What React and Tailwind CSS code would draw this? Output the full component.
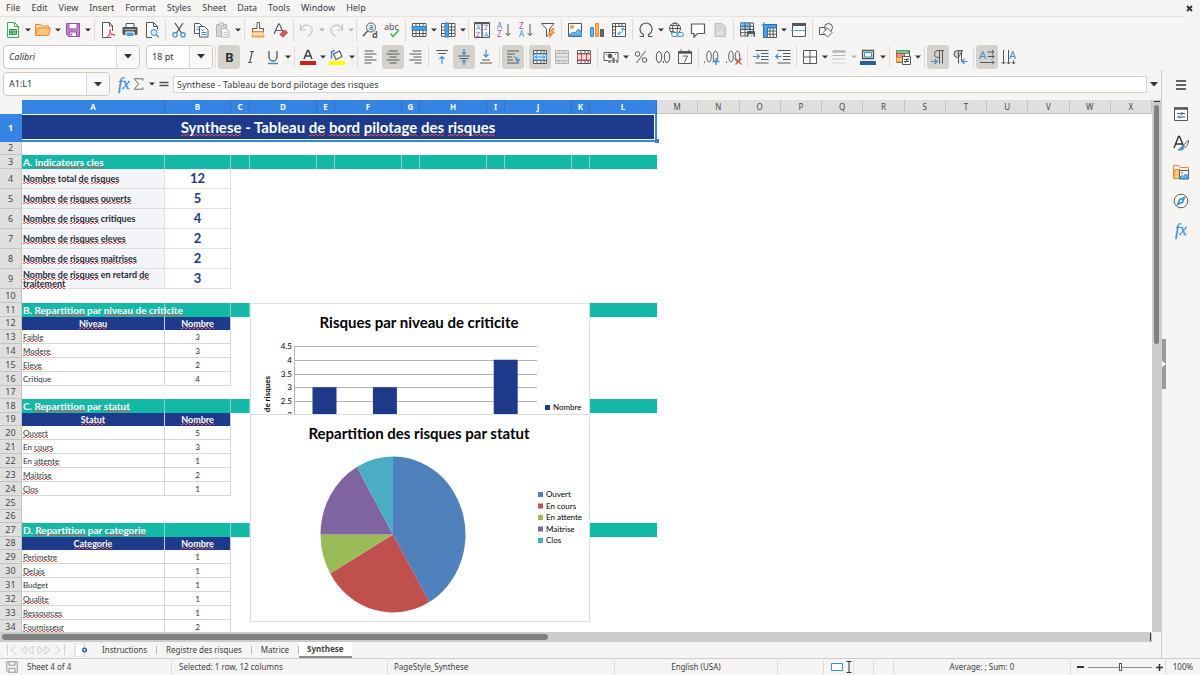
const BLUE = "#3a8fd6"
const GRAY = "#55585a"

const ORANGE = "#ed8733"

function Svg({ children, size = 16, label }) {
  return (
    <svg
      width={size}
      height={size}
      viewBox="0 0 16 16"
      fill="none"
      stroke={GRAY}
      strokeWidth="1"
      aria-label={label}
      className="shrink-0 overflow-visible"
    >
      {children}
    </svg>
  )
}

// Small text drawn inside an icon
function T({ x, y, s = 8, c = GRAY, b, children }) {
  return (
    <text x={x} y={y} fontSize={s} fill={c} stroke="none" fontWeight={b ? 700 : 400} fontFamily="Noto Sans, sans-serif">
      {children}
    </text>
  )
}

const icons = {
  new: (
    <>
      <path d="M2.500 .5h7l4 4v11h-11z" fill="#fff" stroke="#3fae5c" />
      <path d="M9.500 .5v4h4" stroke="#3fae5c" />
      <path d="M4.500 7.500h7v5h-7zM4.500 10h7M7 7.500v5" fill="#8fd6a0" stroke="#2f9b4c" />
    </>
  ),
  open: (
    <>
      <path d="M.5 13.500v-11h5l1.500 1.500h6.500v3" fill="#fcd9a0" stroke={ORANGE} />
      <path d="M.5 13.500l2-7.500h13l-2 7.500z" fill="#fbc878" stroke={ORANGE} />
    </>
  ),
  save: (
    <>
      <path d="M1.500 1.500h13v13h-11l-2-2z" fill="#c77fd0" stroke="#9b4fa8" />
      <path d="M4 1.500h8v5.500h-8z" fill="#fff" stroke="#9b4fa8" />
      <path d="M4.500 10h7v4.500h-7z" fill="#fff" stroke="#9b4fa8" />
      <path d="M6.500 11.500v2" stroke="#9b4fa8" strokeWidth="1.500" />
    </>
  ),
  pdf: (
    <>
      <path d="M11 15.500h-8.500v-15h7l3 3.500v5" fill="#fff" />
      <path d="M9.500 .5v3.500h3" />
      <path d="M7.500 14.500c2-2 3-5 2.500-7 -1 2 2.500 6 5 5.500 -2-1.500-5.500 0-7.500 1.500z" stroke="#d8464d" />
    </>
  ),
  print: (
    <>
      <path d="M4 5v-3.500h8v3.500" fill="#fff" />
      <path d="M1 5.500h14v7h-14z" fill={GRAY} />
      <path d="M2.500 7.500h11" stroke="#8cc4ee" />
      <path d="M4 10h8v4.500h-8z" fill="#4aa0e6" stroke="#fff" />
    </>
  ),
  preview: (
    <>
      <path d="M8 15.500h-5.500v-15h7l4 4v3" fill="#fff" />
      <path d="M9.500 .5v4h4" />
      <circle cx="10" cy="10.500" r="3" fill="#d5eaf9" stroke={BLUE} />
      <path d="M12.300 12.800l2.500 2.500" stroke={BLUE} strokeWidth="1.300" />
    </>
  ),
  cut: (
    <>
      <path d="M4 1l6.500 10M12 1l-6.500 10" strokeWidth="1.300" />
      <circle cx="4" cy="12.800" r="2.200" stroke={BLUE} strokeWidth="1.200" />
      <circle cx="12" cy="12.800" r="2.200" stroke={BLUE} strokeWidth="1.200" />
    </>
  ),
  copy: (
    <>
      <path d="M1.500 1.500h5l3 3v7h-8z" fill="#fff" />
      <path d="M3.500 5h3M3.500 7.500h3" stroke={BLUE} />
      <path d="M6.500 4.500h5l3.500 3.500v7h-8.500z" fill="#fff" />
      <path d="M8.500 8h3M8.500 10.500h5M8.500 12.500h5" stroke={BLUE} />
    </>
  ),
  paste: (
    <>
      <path d="M1.500 2.500h10v12h-10z" fill="#d4d4d2" stroke="#b5b5b3" />
      <path d="M4.500 1h4v2.500h-4z" fill="#efefed" stroke="#b5b5b3" />
      <path d="M6.500 6.500h5l2.500 2.500v6h-7.500z" fill="#f4f4f2" stroke="#b5b5b3" />
      <path d="M8.500 10.500h4M8.500 12.500h4" stroke="#c8c8c6" />
    </>
  ),
  clone: (
    <>
      <path d="M7 .5h2.500v6h4v3h-11v-3h4.500z" fill="#fff" />
      <path d="M3 9.500h10l1 5.500h-12z" fill="#fbc878" stroke={ORANGE} />
      <path d="M2 12h12" stroke="#fff" />
    </>
  ),
  clear: (
    <>
      <path d="M2 12l4.500-10h1l3.500 8M3.500 8.500h6" strokeWidth="1.200" />
      <path d="M8 12.500l4.500-4.500 3 2.500-4.500 4.500z" fill="#e8545c" stroke="#cf3b44" />
    </>
  ),
  undo: <path d="M1.500 2.500v5.500h5.500M1.500 8c2-4 5-5.500 8-4.500 3.500 1.200 5 4.500 2.500 8l-3.500 3" stroke="#c3c3c1" strokeWidth="1.200" />,
  redo: <path d="M14.500 2.500v5.500h-5.500M14.500 8c-2-4-5-5.500-8-4.500 -3.500 1.200-5 4.500-2.500 8l3.500 3" stroke="#c3c3c1" strokeWidth="1.200" />,
  find: (
    <>
      <circle cx="9" cy="5.500" r="4.500" fill="#fff" />
      <path d="M5.800 8.800l-4.800 5.500" strokeWidth="1.500" />
      <T x={6.500} y={8} s={8} c={BLUE} b>a</T>
      <T x={10} y={15.500} s={9} b>d</T>
    </>
  ),
  spell: (
    <>
      <T x={0} y={7.500} s={9}>abc</T>
      <path d="M6.500 11.500l2.500 3 6-6.500" stroke="#3fb65e" strokeWidth="1.500" />
    </>
  ),
  row: (
    <>
      <path d="M1.500 1.500h13.500v13h-13.500z" fill="#fff" />
      <path d="M1.500 8h13.500M1.500 11.500h13.500M5 1.500v13M8.500 1.500v13M12 1.500v13" />
      <path d="M1 4.500h14.500v3.500h-14.500z" fill="#4aa0e6" stroke="#2b7fc4" />
    </>
  ),
  col: (
    <>
      <path d="M1.500 1.500h13.500v13h-13.500z" fill="#fff" />
      <path d="M1.500 5h13.500M1.500 8h13.500M1.500 11.500h13.500M11.500 1.500v13" />
      <path d="M5 1h3.500v14h-3.500z" fill="#4aa0e6" stroke="#2b7fc4" />
    </>
  ),
  sort: (
    <>
      <path d="M.5 .5h15v15h-15z" fill="#fff" />
      <path d="M.5 1.500h15M8 2v13.500" strokeWidth="1.500" />
      <T x={2} y={8} s={7} c={BLUE}>A</T>
      <T x={2} y={14.500} s={7} c="#a452b4">Z</T>
      <T x={10} y={8} s={7} c="#a452b4">Z</T>
      <T x={10} y={14.500} s={7} c={BLUE}>A</T>
    </>
  ),
  sortAsc: (
    <>
      <T x={1} y={7} s={8} c={BLUE}>A</T>
      <T x={1} y={15} s={8} c="#a452b4">Z</T>
      <path d="M12 2v11.500M9.500 11l2.500 2.500 2.500-2.500" />
    </>
  ),
  sortDesc: (
    <>
      <T x={1} y={7} s={8} c="#a452b4">Z</T>
      <T x={1} y={15} s={8} c={BLUE}>A</T>
      <path d="M12 2v11.500M9.500 11l2.500 2.500 2.500-2.500" />
    </>
  ),
  filter: (
    <>
      <path d="M1.500 1.500h12.500l-4.500 5.500v5.500l-3 2v-7.500z" fill="#fff" />
      <path d="M12 6.500l-3.500 5h2.500l-1.500 4 5-5.500h-2.500l2-3.500z" fill="#fbb45c" stroke={ORANGE} />
    </>
  ),
  image: (
    <>
      <path d="M1.500 1.500h13v13h-13z" fill="#fff" />
      <circle cx="5" cy="5" r="1.500" fill="#fbb45c" stroke={ORANGE} />
      <path d="M2 13l4-3 2 1 3.500-4 3 3v4h-12.500z" fill="#6ab4ea" stroke={BLUE} />
    </>
  ),
  chart: (
    <>
      <path d="M1.500 5.500h3v9h-3z" fill="#6ab4ea" stroke={BLUE} />
      <path d="M6.500 1.500h3v13h-3z" fill="#fbb45c" stroke={ORANGE} />
      <path d="M11.500 7.500h3v7h-3z" fill="#6a6d6f" />
    </>
  ),
  pivot: (
    <>
      <path d="M1.500 1.500h13v13h-13zM1.500 4.500h13M4.500 1.500v13" fill="#fff" />
      <path d="M7 11.500c4 0 5-1.500 5-5M10 8l2-2 2 2M9 9.500l-2 2 2 2" stroke={BLUE} />
      <path d="M2 8h2M2 11h2M8 2v2M11 2v2" />
    </>
  ),
  omega: (
    <path
      d="M1.500 14.500h4v-2c-2-1-3.500-3-3.500-5.500a6 6 0 0 1 12 0c0 2.500-1.500 4.500-3.500 5.500v2h4"
      strokeWidth="1.200"
    />
  ),
  link: (
    <>
      <circle cx="7" cy="6.500" r="5.500" fill="#fff" />
      <ellipse cx="7" cy="6.500" rx="2.500" ry="5.500" />
      <path d="M1.500 6.500h11M2.500 3.500h9M2.500 9.500h4" />
      <rect x="3.500" y="10.500" width="6.500" height="4" rx="2" fill="#f6f5f4" stroke={BLUE} />
      <rect x="9" y="10.500" width="6.500" height="4" rx="2" stroke={BLUE} />
    </>
  ),
  comment: <path d="M1.500 2h13v9.500h-7l-3.500 3.500v-3.500h-2.500z" fill="#fff" strokeWidth="1.200" />,
  doc: (
    <>
      <path d="M3 1.500h7l3.500 3.500v9.500h-10.500z" fill="#d6d6d4" stroke="#c0c0be" />
      <path d="M5 10h6M5 12h6" stroke="#efefed" />
    </>
  ),
  printRange: (
    <>
      <path d="M1.500 1h13v13h-13z" fill="#fff" />
      <path d="M1.500 1h9.500v6.500h-9.500z" fill="#8cc4ee" stroke={BLUE} />
      <path d="M1.500 4.200h13M1.500 7.500h13M1.500 10.700h8M6 1v13M11 1v8" />
      <path d="M8.500 9.500h7v5h-7z" fill={GRAY} />
      <path d="M10 12.500h4v2.500h-4z" fill="#8cc4ee" stroke="#fff" />
    </>
  ),
  freeze: (
    <>
      <path d="M2.500 2.500h13v13h-13zM2.500 9h13M2.500 12.200h13M9 5v10.500M12.200 5v10.500" fill="#fff" />
      <path d="M2.500 2.500h13v3.500h-9v9.500h-4z" fill="#4aa0e6" stroke="#2b6fae" />
      <path d="M3 0v6M0 3h6" stroke={BLUE} />
    </>
  ),
  split: (
    <>
      <path d="M1.500 2h13v12.500h-13z" fill="#fff" />
      <path d="M1 2.500h14" strokeWidth="3" />
      <path d="M0 8.500h16" stroke={BLUE} strokeDasharray="3 1" />
    </>
  ),
  shapes: (
    <>
      <path d="M1.500 5.500h7v7h-7z" fill="#fff" />
      <circle cx="10.500" cy="5.500" r="4" fill="#f6f5f4" fillOpacity=".5" />
      <path d="M9.500 6l4.500 4.500-4.500 4.500-4.500-4.500z" fill="#fff" />
    </>
  ),
  bold: <T x={4} y={13} s={13} c="#2e3436" b>B</T>,
  italic: <path d="M7 2.500h4M5 13.500h4M9.300 2.500l-2.600 11" strokeWidth="1.200" />,
  underline: (
    <>
      <path d="M4 2v6a4 4 0 0 0 8 0v-6" strokeWidth="1.300" />
      <path d="M3 14.500h10" stroke={BLUE} strokeWidth="1.500" />
    </>
  ),
  fontColor: (
    <>
      <path d="M4 10l3.500-8.500h1l3.500 8.500M5.300 7h5.500" stroke="#3d4143" strokeWidth="1.500" />
      <path d="M0 14h16" stroke="#c9211e" strokeWidth="4" />
    </>
  ),
  highlight: (
    <>
      <path d="M4.500 5l6-3 2.500 5.500-6 3z" fill="#fff" strokeWidth="1.200" />
      <path d="M2.500 2v7.500M2.500 3l3-1.500" stroke={BLUE} strokeWidth="1.500" />
      <path d="M0 14h16" stroke="#ffff00" strokeWidth="4" />
    </>
  ),
  left: <path d="M1.500 2h9M1.500 5h12M1.500 8h8M1.500 11h12M1.500 14h7" strokeWidth="1.200" />,
  center: <path d="M3.500 2h9M1.500 5h13M4.500 8h7M1.500 11h13M4.500 14h7" strokeWidth="1.200" />,
  right: <path d="M5.500 2h9M2.500 5h12M6.500 8h8M2.500 11h12M7.500 14h7" strokeWidth="1.200" />,
  top: (
    <>
      <path d="M2 1.500h12M4 4.500h8" strokeWidth="1.200" />
      <path d="M8 15v-7M5.500 10l2.500-2.500 2.500 2.500" stroke={BLUE} strokeWidth="1.200" />
    </>
  ),
  middle: (
    <>
      <path d="M2 7h12M4 9.500h8" strokeWidth="1.200" />
      <path d="M8 0v5M6 3.500l2 2 2-2M8 16v-5M6 13l2-2 2 2" stroke={BLUE} strokeWidth="1.200" />
    </>
  ),
  bottom: (
    <>
      <path d="M2 14h12M4 11h8" strokeWidth="1.200" />
      <path d="M8 .5v7M5.500 5.500l2.500 2.500 2.500-2.500" stroke={BLUE} strokeWidth="1.200" />
    </>
  ),
  wrap: (
    <>
      <path d="M2 2h12M2 5h8M2 8h5M2 11h6M2 14h12" strokeWidth="1.200" />
      <path d="M8 8c3 0 5 1 5 4M10.500 10l2.500 2.500 2-2.500" stroke={BLUE} strokeWidth="1.200" />
    </>
  ),
  merge: (
    <>
      <path d="M1.500 1.500h13v13h-13zM1.500 4.500h13M1.500 11.500h13M5 1.500v3M9 1.500v3M12 1.500v3M5 11.500v3M9 11.500v3M12 11.500v3" fill="#fff" />
      <path d="M1.500 5h13v6h-13z" fill="#d5eaf9" stroke={BLUE} />
      <path d="M3 8h10M5 6.500l-2 1.500 2 1.500M11 6.500l2 1.500-2 1.500" stroke={BLUE} />
    </>
  ),
  mergeOff: (
    <path
      d="M1.500 1.500h13v13h-13zM1.500 4.500h13M1.500 8h13M1.500 11.500h13M5 1.500v3M9 1.500v3M12 1.500v3M5 11.500v3M9 11.500v3M12 11.500v3"
      fill="#e4e4e2"
      stroke="#b5b5b3"
    />
  ),
  unmerge: (
    <>
      <path d="M1.500 1.500h13v13h-13zM1.500 4.500h13M1.500 11.500h13M5 1.500v3M9 1.500v3M12 1.500v3M5 11.500v3M9 11.500v3M12 11.500v3" fill="#fff" />
      <path d="M1.500 5h13v6h-13zM5.500 5v6M10.500 5v6" fill="#fbe1e1" stroke="#d8464d" />
    </>
  ),
  currency: (
    <>
      <path d="M1 3.500h14v8h-14z" fill="#fff" />
      <circle cx="7" cy="7" r="2" fill={GRAY} />
      <path d="M3 5.500h1M12 5.500h1" />
      <path d="M5 11h3v3h-3zM9 8.500h3v5.500h-3zM13 10.500h2.500v3.500h-2.500z" fill="#6a6d6f" stroke="#f6f5f4" strokeWidth=".5" />
    </>
  ),
  percent: (
    <>
      <circle cx="4.500" cy="5" r="2.300" />
      <circle cx="11.500" cy="11" r="2.300" />
      <path d="M12.500 2l-9 12" />
    </>
  ),
  decimal: (
    <>
      <ellipse cx="4" cy="8" rx="2.700" ry="5.500" />
      <ellipse cx="12" cy="8" rx="2.700" ry="5.500" />
      <path d="M7.500 12.500h1v1.500" />
    </>
  ),
  date: (
    <>
      <path d="M1.500 2.500h13v12h-13z" fill="#fff" />
      <path d="M1.500 3.500h13" strokeWidth="2.500" />
      <path d="M4 .5v3M12 .5v3M5.500 7h5l-3 6.500" />
    </>
  ),
  addDec: (
    <>
      <path d="M.5 12.500v1.500" />
      <ellipse cx="5" cy="7.500" rx="2.300" ry="5.500" />
      <ellipse cx="11.500" cy="7.500" rx="2.300" ry="5.500" />
      <path d="M12 9v7M8.500 12.500h7" stroke={BLUE} strokeWidth="1.300" />
    </>
  ),
  delDec: (
    <>
      <path d="M.5 12.500v1.500" />
      <ellipse cx="5" cy="7.500" rx="2.300" ry="5.500" />
      <ellipse cx="11.500" cy="7.500" rx="2.300" ry="5.500" />
      <path d="M9.500 9.500l6 6M15.500 9.500l-6 6" stroke="#e0444b" strokeWidth="1.200" />
    </>
  ),
  indent: (
    <>
      <path d="M2.500 1.500h13M8 4.500h7.500M8 7.500h7.500M8 10.500h7.500M2.500 14h13" />
      <path d="M0 7.500h6M4 5.200l2.300 2.300-2.300 2.300" stroke={BLUE} strokeWidth="1.200" />
    </>
  ),
  outdent: (
    <>
      <path d="M2.500 1.500h13M8 4.500h7.500M8 7.500h7.500M8 10.500h7.500M2.500 14h13" />
      <path d="M6.500 7.500h-6M3 5.200l-2.300 2.300 2.300 2.300" stroke={BLUE} strokeWidth="1.200" />
    </>
  ),
  borders: <path d="M1.500 1.500h13v13h-13zM8 1.500v13M1.500 8h13" fill="#fff" />,
  borderStyle: (
    <>
      <path d="M1.500 2.500h13" stroke="#b5b5b3" strokeWidth="2.500" />
      <path d="M1.500 6.500h13" stroke="#b5b5b3" />
      <path d="M1.500 10h13" stroke="#b5b5b3" strokeDasharray="3 1" />
      <path d="M1.500 14h13" stroke="#b5b5b3" strokeDasharray="1 1" />
    </>
  ),
  borderColor: (
    <>
      <path d="M2.500 1.500h11v8h-11z" fill="#d5eaf9" strokeWidth="1.300" />
      <path d="M4.500 3.500h7v4.500h-7z" fill="#fff" stroke={BLUE} />
      <path d="M0 14h16" stroke="#2a6099" strokeWidth="4" />
    </>
  ),
  conditional: (
    <>
      <path d="M1.500 1.500h13v12h-13z" fill="#fff" />
      <path d="M1.500 1.500h12v3h-12z" fill="#7ecb8f" stroke="#3fae5c" />
      <path d="M1.500 4.500h8v4h-8z" fill="#f08a8f" stroke="#d8464d" />
      <path d="M1.500 8.500h6v4.500h-6z" fill="#fbc878" stroke={ORANGE} />
      <path d="M7.500 7.500h8v8h-8z" fill="#fff" />
      <path d="M9 10.500h5M9 12.500h5M13 9l-3 5" />
    </>
  ),
  ltr: (
    <>
      <path d="M14 1.500h-6a3.500 3.500 0 0 0 0 7h1M9.500 1.500v13M12.500 1.500v13" />
      <path d="M1 12.500h5.500M4.500 10l2.500 2.500-2.500 2.500" stroke={BLUE} strokeWidth="1.200" />
    </>
  ),
  rtl: (
    <>
      <path d="M10.500 1.500h-5a3.500 3.500 0 0 0 0 7h1zM6.500 1.500v13M9.500 1.500v11" fill="#cfcfcd" />
      <path d="M15.500 12.500h-5.500M12.500 10l-2.500 2.500 2.500 2.500" stroke={BLUE} strokeWidth="1.200" />
    </>
  ),
  textLr: (
    <>
      <T x={0} y={10} s={11} c={BLUE}>A</T>
      <path d="M8.500 3h6.500M8.500 7.500h6.500M1 13.500h14M13 1l2 2-2 2M13 5.500l2 2-2 2M13 11.500l2 2-2 2" />
    </>
  ),
  textTb: (
    <>
      <T x={8} y={10} s={11} c={BLUE}>A</T>
      <path d="M2.500 1v14M7.500 1v14M12.500 11v4M.5 13l2 2 2-2M5.500 13l2 2 2-2M10.500 13l2 2 2-2" />
    </>
  ),
  fx: (
    <text x="2" y="12.500" fontSize="16" fontStyle="italic" fill={BLUE} stroke={BLUE} strokeWidth=".3" fontFamily="Liberation Serif, serif">
      fx
    </text>
  ),
  sigma: <path d="M12.500 4v-2h-10l5 6-5 6h10v-2" />,
  equals: <path d="M2 6h12M2 10h12" strokeWidth="2" />,
  menu: <path d="M3 4h10M3 8h10M3 12h10" stroke="#2e3436" strokeWidth="1.500" />,
  properties: (
    <>
      <path d="M1.500 2h13v12.500h-13z" fill="#fff" />
      <path d="M1 2.500h14" strokeWidth="2.500" />
      <path d="M4 7.500h8M4 11h8" />
      <path d="M9 6v3M6.500 9.500v3" stroke={BLUE} strokeWidth="1.500" />
    </>
  ),
  styles: (
    <>
      <path d="M1 13l4.500-11.500h1l4 9.500M2.500 9h7" stroke="#2e3436" strokeWidth="1.400" />
      <path d="M15.500 5.500c-2 1-4 3.500-5 5.500l1.500 1.500c2-1.500 4-5 3.500-7z" fill="#fff" />
      <path d="M5 15c2.500 0 2-3.500 5-3.500 1.500 1.500 1 4-5 3.500z" fill={BLUE} stroke={BLUE} />
    </>
  ),
  gallery: (
    <>
      <path d="M.5 14.500v-13h5l1.500 2h8.500v4" stroke={ORANGE} />
      <path d="M.5 14.500l1.500-9h5v9z" fill="#fbc878" stroke={ORANGE} />
      <path d="M6.500 6.500h9v8.500h-9z" fill="#fff" />
      <circle cx="9" cy="9" r=".8" fill="#fbb45c" stroke={ORANGE} />
      <path d="M7 13l2-1.500 1.500 1 2-2.500 2.500 2v2.500h-8z" fill="#6ab4ea" stroke={BLUE} />
    </>
  ),
  navigator: (
    <>
      <circle cx="8" cy="8" r="6.800" fill="#fff" />
      <path d="M11.500 4.500l-2 5-5 2 2-5z" fill="#6ab4ea" stroke={BLUE} strokeWidth="1.400" />
      <circle cx="8" cy="8" r="1" fill="#fff" stroke="none" />
    </>
  ),
  docSaved: (
    <path d="M2 2h12v12h-10.500l-1.500-1.500zM4.500 2v4h7v-4M4.500 14v-4.500h7v4.500" stroke="#8a8d8f" />
  ),
}

function Icon({ name, size }) {
  return <Svg size={size}>{icons[name]}</Svg>
}

function Caret({ className = "w-[8px]", dim }) {
  return (
    <button aria-label="More" className={`${className} flex h-[24px] shrink-0 items-center justify-center`}>
      <svg width="6" height="4" viewBox="0 0 6 4" className="shrink-0">
        <path d="M0 .5h6l-3 3z" fill={dim ? "#b5b5b3" : "#2e3436"} />
      </svg>
    </button>
  )
}

function Tool({ name, active }) {
  return (
    <button
      aria-label={name}
      aria-pressed={active || undefined}
      className={`flex h-[24px] w-[22px] shrink-0 items-center justify-center rounded-[3px] ${active ? "bg-[#d5d2ce]" : ""}`}
    >
      <Icon name={name} />
    </button>
  )
}

// "|" is a separator, "v" a caret, "w" a wide caret, "x" a disabled one, "*" marks a pressed button
function Tools({ items }) {
  return items.split(" ").map((it, i) => {
    if (it === "|") {
      return (
        <span key={i} className="flex h-[22px] w-[5px] shrink-0 justify-center">
          <span className="w-px bg-[#dfdddb]" />
        </span>
      )
    }
    if (it === "v") return <Caret key={i} className="w-[7px]" />
    if (it === "w") return <Caret key={i} />
    if (it === "x") return <Caret key={i} className="w-[7px]" dim />
    return <Tool key={i} name={it.replace("*", "")} active={it.endsWith("*")} />
  })
}

function Combo({ label, value, className, inputClass = "" }) {
  return (
    <div className={`flex h-[24px] shrink-0 overflow-hidden rounded-[4px] border border-[#cdc7c2] bg-white ${className}`}>
      <input
        aria-label={label}
        defaultValue={value}
        className={`w-0 flex-1 px-[5px] text-[9px] text-[#2e3436] outline-none ${inputClass}`}
      />
      <button aria-label={`${label} list`} className="flex w-[23px] items-center justify-center border-l border-[#dcd8d5] bg-[#f9f8f7]">
        <svg width="8" height="5" viewBox="0 0 8 5">
          <path d="M0 0h8l-4 4.500z" fill="#2e3436" />
        </svg>
      </button>
    </div>
  )
}

function MenuBar() {
  const menus = ["File", "Edit", "View", "Insert", "Format", "Styles", "Sheet", "Data", "Tools", "Window", "Help"]
  return (
    <nav className="mr-[16px] flex h-[17px] shrink-0 items-center gap-[11px] border-b border-[#e4e2e0] pl-[6px] text-[9px]">
      {menus.map((m) => (
        <button key={m}>{m}</button>
      ))}
      <button aria-label="Close document" className="-mr-[9px] ml-auto">
        <svg width="7" height="7" viewBox="0 0 7 7" stroke="#2e3436" strokeWidth="1.800">
          <path d="M1 1l5 5M6 1l-5 5" />
        </svg>
      </button>
    </nav>
  )
}

// Words in brackets get the spell checker's zigzag, made of two dashed rows
function Spelled({ text }) {
  return text.split(/(\[[^\]]+\])/).map((part, i) =>
    part.startsWith("[") ? (
      <span
        key={i}
        className="bg-[linear-gradient(90deg,#e4504b_50%,transparent_50%),linear-gradient(90deg,transparent_50%,#e4504b_50%)] bg-[length:4px_1px,4px_1px] bg-[position:0_100%,0_calc(100%-1px)] bg-repeat-x"
      >
        {part.slice(1, -1)}
      </span>
    ) : (
      part
    )
  )
}

const columns = [
  ["A", "w-[143px]"],
  ["B", "w-[66px]"],
  ["C", "w-[19px]"],
  ["D", "w-[67px]"],
  ["E", "w-[18px]"],
  ["F", "w-[67px]"],
  ["G", "w-[18px]"],
  ["H", "w-[67px]"],
  ["I", "w-[18px]"],
  ["J", "w-[67px]"],
  ["K", "w-[18px]"],
  ["L", "w-[67px]"],
  ..."MNOPQRSTUVWX".split("").map((c) => [c, ""]),
]

const rows = [
  { kind: "title", a: "[Synthese] - Tableau [de] [bord] [pilotage] [des] [risques]" },
  { kind: "empty", short: true },
  { kind: "section", a: "A. [Indicateurs] [cles]", split: true },
  { kind: "kpi", a: "[Nombre] total [de] [risques]", b: 12 },
  { kind: "kpi", a: "[Nombre] [de] [risques] [ouverts]", b: 5 },
  { kind: "kpi", a: "[Nombre] [de] [risques] critiques", b: 4 },
  { kind: "kpi", a: "[Nombre] [de] [risques] [eleves]", b: 2 },
  { kind: "kpi", a: "[Nombre] [de] [risques] [maitrises]", b: 2 },
  { kind: "kpi", a: "[Nombre] [de] [risques] en retard [de] [traitement]", b: 3 },
  { kind: "empty" },
  { kind: "section", a: "B. [Repartition] par [niveau] [de] [criticite]" },
  { kind: "head", a: "[Niveau]", b: "[Nombre]", short: true },
  { kind: "data", a: "[Faible]", b: 3 },
  { kind: "data", a: "[Modere]", b: 3 },
  { kind: "data", a: "[Eleve]", b: 2 },
  { kind: "data", a: "Critique", b: 4 },
  { kind: "empty", short: true },
  { kind: "section", a: "C. [Repartition] par [statut]" },
  { kind: "head", a: "[Statut]", b: "[Nombre]", short: true },
  { kind: "data", a: "[Ouvert]", b: 5 },
  { kind: "data", a: "En [cours]", b: 3 },
  { kind: "data", a: "En [attente]", b: 1 },
  { kind: "data", a: "[Maitrise]", b: 2 },
  { kind: "data", a: "[Clos]", b: 1 },
  { kind: "empty" },
  { kind: "empty", short: true },
  { kind: "section", a: "D. [Repartition] par [categorie]" },
  { kind: "head", a: "[Categorie]", b: "[Nombre]", short: true },
  { kind: "data", a: "[Perimetre]", b: 1 },
  { kind: "data", a: "[Delais]", b: 1 },
  { kind: "data", a: "Budget", b: 1 },
  { kind: "data", a: "[Qualite]", b: 1 },
  { kind: "data", a: "[Ressources]", b: 1 },
  { kind: "data", a: "[Fournisseur]", b: 2 },
]

function rowHeight(row) {
  if (row.kind === "title") return "h-[28px]"
  if (row.kind === "kpi") return "h-[20px]"
  return row.short ? "h-[13px]" : "h-[14px]"
}

function RowCells({ row }) {
  switch (row.kind) {
    case "title":
      return (
        <td colSpan={12} className="relative border-r-2 border-b-2 border-[#3584e4] bg-[#1e3a8a] p-0">
          <div className="flex h-[26px] items-center justify-center border-y border-r border-white text-[15px] leading-[18px] font-bold text-white">
            <p>
              <Spelled text={row.a} />
            </p>
          </div>
          <span className="absolute -right-[4px] -bottom-[3px] size-[4px] bg-[#3584e4]" />
        </td>
      )
    case "section":
      return (
        <>
          <td className="overflow-visible border-r border-[#7fd6cc] bg-[#14b8a6] p-0 pl-px text-[10px] leading-[12px] font-bold whitespace-nowrap text-white">
            <Spelled text={row.a} />
          </td>
          {columns.slice(1, 12).map(([c]) => (
            <td key={c} className={`bg-[#14b8a6] p-0 ${c === "L" ? "" : "border-r border-[#7fd6cc]"}`} />
          ))}
        </>
      )
    case "kpi":
      return (
        <>
          <td className="border-r border-b border-[#dde1e5] bg-[#f3f5f8] p-0 pl-px text-[9px] leading-[9px] font-bold text-[#1f2937]">
            <Spelled text={row.a} />
          </td>
          <td className="border-r border-b border-[#dde1e5] p-0 text-center text-[13px] leading-[15px] font-bold text-[#1e3a8a]">{row.b}</td>
        </>
      )
    case "head":
      return (
        <>
          <td className="border-r border-[#c5cbe0] bg-[#1e3a8a] p-0 text-center text-[9px] leading-[12px] font-bold text-white">
            <Spelled text={row.a} />
          </td>
          <td className="border-r border-[#c5cbe0] bg-[#1e3a8a] p-0 text-center text-[9px] leading-[12px] font-bold text-white">
            <Spelled text={row.b} />
          </td>
        </>
      )
    case "data":
      return (
        <>
          <td className="border-r border-b border-[#d3d7dc] p-0 pl-px text-[8px] leading-[12px]">
            <Spelled text={row.a} />
          </td>
          <td className="border-r border-b border-[#d3d7dc] p-0 text-center text-[8px] leading-[12px]">{row.b}</td>
        </>
      )
    default:
      return null
  }
}

function BarChart() {
  const ticks = ["4.5", "4", "3.5", "3", "2.5", "2"]
  const bars = [3, 3, 2, 4]
  const y = (v) => 43 + (4.5 - v) * 27.500
  return (
    <div className="border border-b-0 border-[#dcdfe0] bg-white">
      <svg width="338" height="110" viewBox="1 1 338 110" className="block" fontFamily="Lato, sans-serif">
        <text x="169" y="25" fontSize="15" fontWeight="700" textAnchor="middle">
          Risques par niveau de criticite
        </text>
        {ticks.map((t) => (
          <g key={t}>
            <path d={`M44 ${Math.round(y(Number(t))) + 0.5}h243`} stroke="#b3b3b3" />
            <text x="42" y={y(Number(t)) + 3} fontSize="8" textAnchor="end">
              {t}
            </text>
          </g>
        ))}
        <path d="M44.500 43v70" stroke="#b3b3b3" />
        {bars.map((v, i) => (
          <rect key={i} x={62.500 + i * 60.400} y={y(v)} width="24" height={113 - y(v)} fill="#1e3a8a" />
        ))}
        <text transform="translate(20 73) rotate(-90)" fontSize="8" fontWeight="700" textAnchor="end">
          Nombre de risques
        </text>
        <rect x="295" y="102" width="5" height="5" fill="#1e3a8a" />
        <text x="303" y="107" fontSize="8">
          Nombre
        </text>
      </svg>
    </div>
  )
}

const statuses = [
  ["Ouvert", 5, "#4f81bd"],
  ["En cours", 3, "#c0504d"],
  ["En attente", 1, "#9bbb59"],
  ["Maitrise", 2, "#8064a2"],
  ["Clos", 1, "#4bacc6"],
]

function PieChart() {
  const total = statuses.reduce((sum, s) => sum + s[1], 0)
  const point = (n) => {
    const a = (n / total) * 2 * Math.PI
    return `${143 + 72.500 * Math.sin(a)} ${120.500 - 78 * Math.cos(a)}`
  }
  let start = 0
  return (
    <div className="border border-[#dcdfe0] bg-white">
      <svg width="338" height="206" viewBox="1 1 338 206" className="block" fontFamily="Lato, sans-serif">
        <text x="169" y="25" fontSize="15" fontWeight="700" textAnchor="middle">
          Repartition des risques par statut
        </text>
        {statuses.map(([name, n, color]) => {
          const from = start
          start += n
          return <path key={name} d={`M143 120.500L${point(from)}A72.500 78 0 0 1 ${point(start)}z`} fill={color} />
        })}
        {statuses.map(([name, , color], i) => (
          <g key={name}>
            <rect x="288" y={78 + i * 11.500} width="5" height="5" fill={color} />
            <text x="296" y={83 + i * 11.500} fontSize="8">
              {name}
            </text>
          </g>
        ))}
      </svg>
    </div>
  )
}

function Sheet() {
  return (
    <div className="relative h-0 flex-1 overflow-hidden bg-white font-['Lato',sans-serif]">
      <table className="w-full table-fixed border-separate border-spacing-0 text-[#2b3440]">
        <thead className="font-['Noto_Sans',sans-serif] text-[8px] leading-[12px]">
          <tr className="h-[14px]">
            <th className="w-[22px] bg-[#f6f5f4] p-0" />
            {columns.map(([c, w], i) => (
              <th
                key={c}
                className={`${w} border-r p-0 ${i < 12 ? "border-[#2f74cc] bg-[#3584e4] font-bold text-white" : "border-b border-[#c4c4c2] bg-[#dfdfdd] font-normal text-[#45484a]"}`}
              >
                {c}
              </th>
            ))}
          </tr>
        </thead>
        <tbody>
          {rows.map((row, i) => (
            <tr key={i} className={rowHeight(row)}>
              <th
                className={`border-r border-b p-0 font-['Noto_Sans',sans-serif] text-[9px] leading-[12px] ${i === 0 ? "border-[#3584e4] bg-[#3584e4] font-bold text-white" : "border-[#c4c4c2] bg-[#dfdfdd] font-normal text-[#45484a]"}`}
              >
                {i + 1}
              </th>
              <RowCells row={row} />
            </tr>
          ))}
        </tbody>
      </table>
      {/* Charts float over the cells */}
      <div className="absolute top-[203px] left-[250px]">
        <BarChart />
        <PieChart />
      </div>
    </div>
  )
}

function SheetTabs() {
  return (
    <div className="flex h-[16px] shrink-0 items-stretch text-[8px]">
      <svg width="62" height="12" viewBox="0 0 62 12" fill="none" stroke="#cfcfcd" className="mt-[2px] ml-[5px]">
        <path d="M2.500 1v10M11 1.500l-5 4.500 5 4.500M21 2l-5 4 5 4zM28 2l-5 4 5 4zM33 2l5 4-5 4zM40 2l5 4-5 4zM50 1.500l5 4.500-5 4.500M59.500 1v10" />
      </svg>
      <button aria-label="Add sheet" className="ml-[7px] flex w-[16px] items-center">
        <svg width="14" height="14" viewBox="0 0 14 14">
          <path d="M1 0h9v14h-9z" fill="#fff" stroke="#cfcfcd" />
          <circle cx="10.500" cy="7" r="2.500" fill="#1f5fb8" />
          <path d="M9.300 7h2.400M10.500 5.800v2.400" stroke="#fff" strokeWidth=".8" />
        </svg>
      </button>
      <div role="tablist" className="ml-[3px] flex items-stretch">
        {["Instructions", "Registre des risques", "Matrice"].map((t) => (
          <button key={t} role="tab" className="flex items-center">
            <span className="px-[9px]">{t}</span>
            <span className="h-[8px] w-px bg-[#b5b5b3]" />
          </button>
        ))}
        <button role="tab" aria-selected="true" className="border-b-2 border-[#8b8e8f] bg-white px-[8px] font-bold">
          Synthese
        </button>
      </div>
    </div>
  )
}

function StatusBar() {
  const cell = "flex items-center border-r border-[#dfdddb]"
  return (
    <footer className="grid h-[17px] shrink-0 grid-cols-[172px_216fr_227fr_163fr_46px_30px_20px_20px_177fr_95px_34px] border-t border-[#cfcdcb] py-px text-[8px]">
      <div className={`${cell} gap-[8px] pl-[5px]`}>
        <Icon name="docSaved" size={14} />
        Sheet 4 of 4
      </div>
      <div className={`${cell} pl-[7px]`}>Selected: 1 row, 12 columns</div>
      <div className={`${cell} pl-[6px]`}>PageStyle_Synthese</div>
      <div className={`${cell} justify-center`}>English (USA)</div>
      <div className={cell} />
      <div className={`${cell} gap-[3px] pl-[7px]`}>
        <svg width="12" height="8" viewBox="0 0 12 8" fill="#fff" stroke="#3a8fd6" className="shrink-0">
          <path d="M.5 .5h11v7h-11z" />
        </svg>
        <svg width="6" height="12" viewBox="0 0 6 12" fill="none" stroke="#2e3436" className="shrink-0">
          <path d="M.5 .5h5M3 .5v11M.5 11.500h5" />
        </svg>
      </div>
      <div className={cell} />
      <div className={cell} />
      <div className={`${cell} justify-center`}>Average: ; Sum: 0</div>
      <div className={`${cell} gap-[4px] pl-[6px]`}>
        <button aria-label="Zoom out" className="h-[2px] w-[7px] bg-[#2e3436]" />
        <input
          type="range"
          aria-label="Zoom"
          defaultValue="50"
          className="h-[8px] w-[64px] appearance-none bg-[linear-gradient(#8b8e8f,#8b8e8f)] bg-[length:100%_1px] bg-center bg-no-repeat [&::-webkit-slider-thumb]:h-[8px] [&::-webkit-slider-thumb]:w-[3px] [&::-webkit-slider-thumb]:appearance-none [&::-webkit-slider-thumb]:border [&::-webkit-slider-thumb]:border-[#55585a] [&::-webkit-slider-thumb]:bg-white"
        />
        <button aria-label="Zoom in">
          <svg width="7" height="7" viewBox="0 0 7 7" stroke="#2e3436" strokeWidth="1.500">
            <path d="M0 3.500h7M3.500 0v7" />
          </svg>
        </button>
      </div>
      <div className="flex items-center justify-center">100%</div>
    </footer>
  )
}

export default function App() {
  return (
    <div className="flex h-screen flex-col overflow-hidden bg-[#f6f5f4] font-['Noto_Sans',sans-serif] text-[#3d4143]">
      <MenuBar />
      <div className="flex h-[26px] shrink-0 items-center pl-[2px]">
        <Tools items="new w open w save w | pdf print preview | cut copy paste w | clone clear | undo x redo x | find spell | row v col v | sort sortAsc sortDesc filter | image chart pivot | omega w link comment doc | printRange freeze w split | shapes" />
      </div>
      <div className="flex h-[27px] shrink-0 items-center pl-[3px]">
        <Combo label="Font name" value="Calibri" className="mr-[6px] w-[137px]" inputClass="italic" />
        <Combo label="Font size" value="18 pt" className="w-[67px]" />
        <Tools items="| bold* italic underline w | fontColor v highlight v | left center* right | top middle* bottom | wrap* | merge* mergeOff unmerge | currency w percent decimal date | addDec delDec | indent outdent | borders v borderStyle x borderColor w | conditional w | ltr* rtl | textLr* textTb" />
      </div>
      <div className="flex h-0 flex-1">
        <main className="flex w-0 flex-1 flex-col">
          <div className="flex h-[30px] shrink-0 items-center pb-[2px] pl-[3px]">
            <Combo label="Name box" value="A1:L1" className="w-[107px]" />
            <div className="flex flex-1 items-center pl-[6px]">
              <Icon name="fx" />
              <Icon name="sigma" size={14} />
              <Caret className="w-[12px]" />
              <Icon name="equals" size={12} />
              <input
                aria-label="Formula"
                defaultValue="Synthese - Tableau de bord pilotage des risques"
                className="ml-[3px] h-[17px] w-0 flex-1 border border-[#d5d2ce] bg-white px-[3px] text-[9px] outline-none"
              />
              <button aria-label="Expand formula bar" className="flex w-[14px] justify-center">
                <svg width="8" height="5" viewBox="0 0 8 5">
                  <path d="M0 0h8l-4 4.500z" fill="#2e3436" />
                </svg>
              </button>
            </div>
          </div>
          <div className="flex h-0 flex-1">
            <div className="flex w-0 flex-1 flex-col">
              <Sheet />
              <div className="flex h-[10px] shrink-0 items-center justify-between bg-[#cdcdcd] pl-[2px]">
                <div className="h-[6px] w-[546px] rounded-full bg-[#7e807f]" />
                <div className="mr-px h-[8px] w-px bg-[#2e3436]" />
              </div>
            </div>
            <div className="mb-[10px] flex w-[9px] flex-col items-center bg-[#cdcdcd] pt-px">
              <div className="h-px w-[6px] bg-[#2e3436]" />
              <div className="mt-[3px] h-[239px] w-[5px] rounded-full bg-[#7e807f]" />
            </div>
          </div>
          <SheetTabs />
        </main>
        <aside className="relative flex w-[39px] shrink-0 flex-col items-center gap-[13px] border-l border-[#cfcdcb] pt-[7px]">
          {["menu", "properties", "styles", "gallery", "navigator", "fx"].map((n) => (
            <button key={n} aria-label={n}>
              <Icon name={n} />
            </button>
          ))}
          <button aria-label="Hide sidebar" className="absolute top-[269px] left-0 flex h-[50px] w-[4px] items-center bg-[#9a9c9b]">
            <svg width="4" height="6" viewBox="0 0 4 6">
              <path d="M0 0l4 3-4 3z" fill="#fff" />
            </svg>
          </button>
        </aside>
      </div>
      <StatusBar />
    </div>
  )
}
